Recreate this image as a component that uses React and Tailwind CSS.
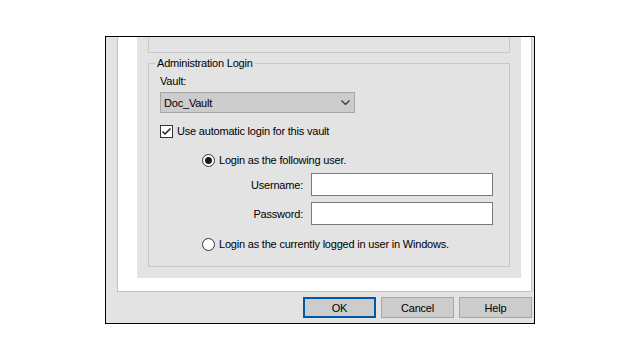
export default function App() {
  return (
    <div
      className="w-[640px] h-[360px] bg-white overflow-hidden text-[11px] leading-[14px] text-black tracking-[-0.2px]"
      style={{ fontFamily: '"Liberation Sans", Arial, sans-serif' }}
    >
      {/* dialog window, cropped at the top */}
      <div className="ml-[105px] mt-[36px] w-[430px] h-[288px] border border-black bg-[#e3e3e3] flex flex-col">
        {/* tab page */}
        <div className="ml-[11px] mr-[2px] h-[255px] bg-white border border-t-0 border-[#c3c3c3] pl-[19px] pr-[10px] pb-[13px]">
          <div className="h-full bg-[#e3e3e3] px-[11px] flex flex-col">
            {/* previous group box, mostly above the crop */}
            <div className="h-[16px] border border-t-0 border-[#c8c8c8]" />

            <fieldset className="mt-[3px] h-[211px] border border-[#c8c8c8] pl-[11px]">
              <legend className="ml-[-5px] px-[2px]">Administration Login</legend>

              <div className="mt-[4px]">Vault:</div>
              <div className="mt-[4px] w-[195px] h-[21px] bg-[#cccccc] border border-[#a6a6a6] flex items-center justify-between pl-[3px] pr-[4px]">
                <span>Doc_Vault</span>
                <svg width="9" height="5" viewBox="0 0 9 5" fill="none">
                  <path d="M0.5 0.5 L4.5 4.5 L8.5 0.5" stroke="#333" strokeWidth="1.2" />
                </svg>
              </div>

              <label className="mt-[11px] flex items-center gap-[4px]">
                <span className="w-[13px] h-[13px] border border-[#333] bg-white flex items-center justify-center">
                  <svg width="11" height="11" viewBox="0 0 11 11" fill="none">
                    <path d="M1.5 5.5 L4 8 L9.5 2.5" stroke="#222" strokeWidth="1.5" />
                  </svg>
                </span>
                <span>Use automatic login for this vault</span>
              </label>

              <div className="ml-[42px] mt-[15px] flex items-center gap-[4px]">
                <span className="w-[13px] h-[13px] rounded-full border border-[#333] bg-white flex items-center justify-center">
                  <span className="w-[7px] h-[7px] rounded-full bg-[#1a1a1a]" />
                </span>
                <span>Login as the following user.</span>
              </div>

              <div className="mt-[6px] flex items-center gap-[8px]">
                <span className="w-[143px] text-right">Username:</span>
                <div className="w-[182px] h-[23px] bg-white border border-[#7a7a7a]" />
              </div>
              <div className="mt-[6px] flex items-center gap-[8px]">
                <span className="w-[143px] text-right">Password:</span>
                <div className="w-[182px] h-[23px] bg-white border border-[#7a7a7a]" />
              </div>

              <div className="ml-[42px] mt-[12px] flex items-center gap-[4px]">
                <span className="w-[13px] h-[13px] rounded-full border border-[#333] bg-white" />
                <span>Login as the currently logged in user in Windows.</span>
              </div>
            </fieldset>
          </div>
        </div>

        {/* buttons */}
        <div className="mt-[5px] mr-[2px] flex justify-end gap-[5px]">
          <button className="w-[73px] h-[21px] bg-[#cccccc] border-2 border-[#0058a8]">OK</button>
          <button className="w-[73px] h-[21px] bg-[#cccccc] border border-[#a6a6a6]">Cancel</button>
          <button className="w-[73px] h-[21px] bg-[#cccccc] border border-[#a6a6a6]">Help</button>
        </div>
      </div>
    </div>
  );
}
